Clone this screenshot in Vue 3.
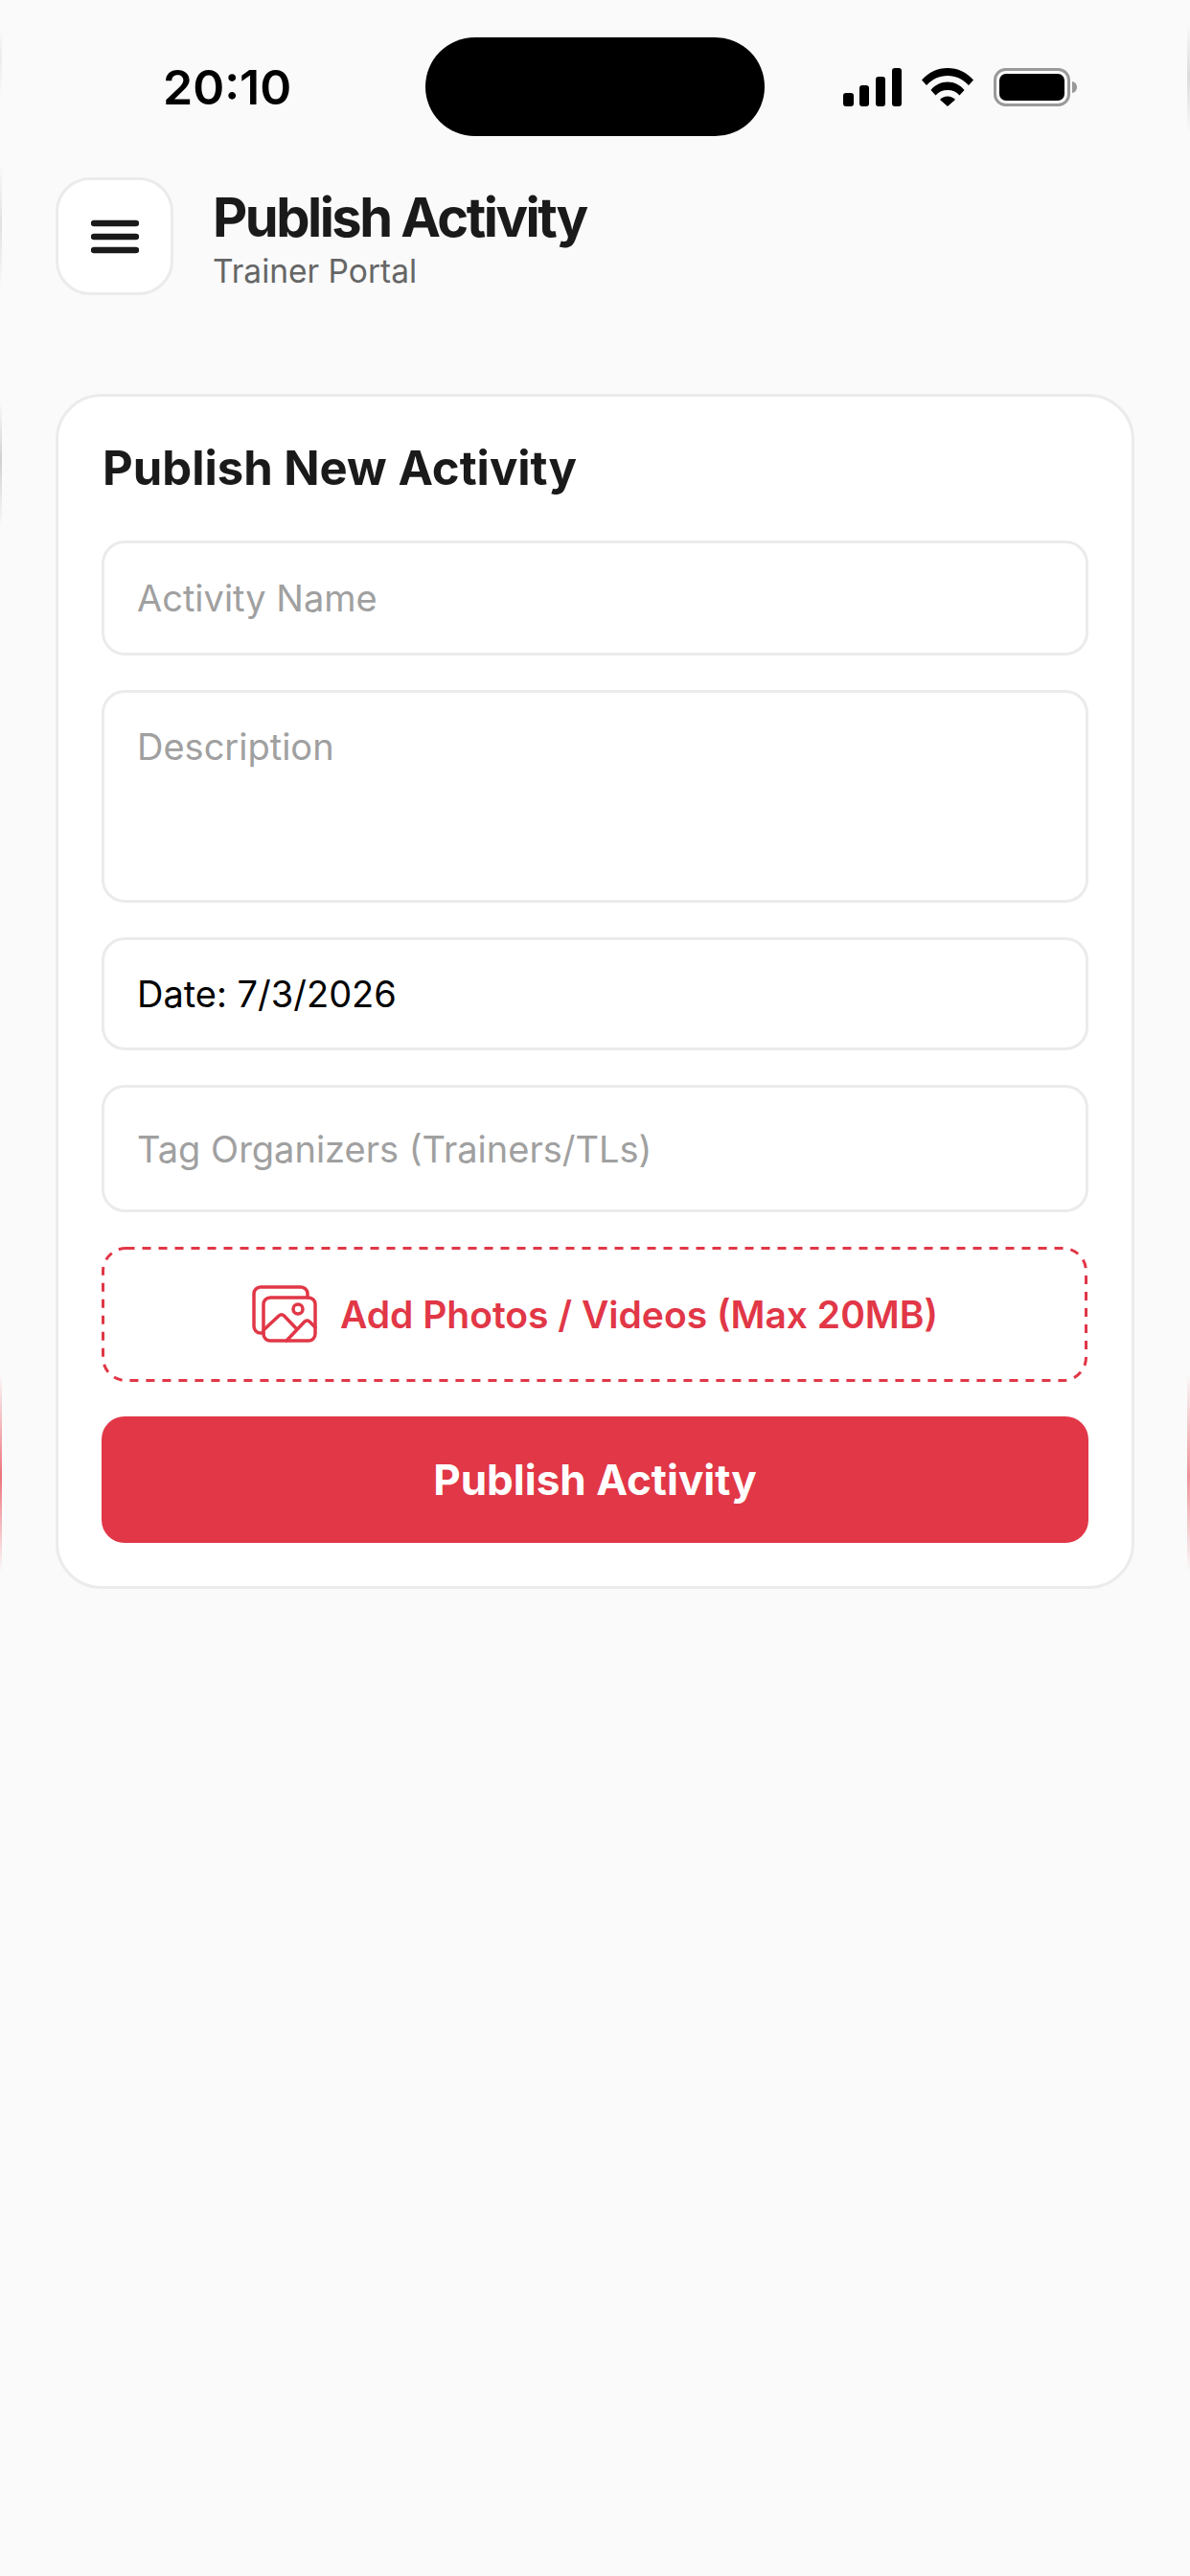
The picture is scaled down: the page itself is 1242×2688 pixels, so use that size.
<script setup>
const rows = [
  { key: 'name', text: 'Activity Name', cls: 'field placeholder' },
  { key: 'desc', text: 'Description', cls: 'field placeholder area' },
  { key: 'date', text: 'Date: 7/3/2026', cls: 'field value short' },
  { key: 'tags', text: 'Tag Organizers (Trainers/TLs)', cls: 'field placeholder tall' }
]
</script>

<template>
  <div class="page">
    <div class="edge edge-left"></div>
    <div class="edge edge-right"></div>

    <div class="status">
      <span class="time">20:10</span>
      <div class="island"></div>
      <div class="status-icons">
        <svg width="61" height="40" viewBox="0 0 61 40">
          <rect x="0" y="26" width="11" height="14" rx="3" />
          <rect x="17" y="18" width="10" height="22" rx="3" />
          <rect x="34" y="9" width="10" height="31" rx="3" />
          <rect x="51" y="0" width="10" height="40" rx="3" />
        </svg>
        <svg width="54" height="40" viewBox="0 0 54 40">
          <path d="M0 12.500C7 4.500 16.500 0 27 0s20 4.500 27 12.500l-5 5.500C43 11.500 35.500 8 27 8S11 11.500 5 18z" />
          <path d="M9.500 23C14 17.500 20 14.500 27 14.500S40 17.500 44.500 23l-5 5.500C36 24.800 32 23 27 23s-9 1.800-12.500 5.500z" />
          <path d="M19 33c2-2.300 4.800-3.500 8-3.500s6 1.200 8 3.500l-8 7z" />
        </svg>
        <svg width="87" height="40" viewBox="0 0 87 40">
          <rect x="1.500" y="1.500" width="77" height="37" rx="11" fill="none" stroke="#999" stroke-width="3" />
          <rect x="6" y="6" width="68" height="28" rx="7" />
          <path d="M82 14c3 .5 5 3 5 6s-2 5.500-5 6z" fill="#999" />
        </svg>
      </div>
    </div>

    <header class="header">
      <div class="menu">
        <svg width="50" height="36" viewBox="0 0 50 36">
          <path d="M3 4h44M3 18h44M3 32h44" fill="none" stroke="#1a1a1a" stroke-width="6.500" stroke-linecap="round" />
        </svg>
      </div>
      <div class="heading">
        <h1 class="title">Publish Activity</h1>
        <p class="subtitle">Trainer Portal</p>
      </div>
    </header>

    <section class="card">
      <h2 class="card-title">Publish New Activity</h2>
      <div class="form">
        <div v-for="row in rows" :key="row.key" :class="row.cls">{{ row.text }}</div>
        <div class="upload">
          <svg class="dash" width="1029" height="141" viewBox="0 0 1029 141" fill="none">
            <rect x="1.500" y="1.500" width="1026" height="138" rx="24" stroke="#e13747" stroke-width="3" stroke-dasharray="9 8" />
          </svg>
          <svg width="68" height="60" viewBox="0 0 68 60" fill="none" stroke="#e13747" stroke-width="3.500" stroke-linecap="round" stroke-linejoin="round">
            <path d="M12 50H9a7 7 0 0 1-7-7V9a7 7 0 0 1 7-7h42a7 7 0 0 1 7 7v4" />
            <rect x="12" y="13" width="54" height="45" rx="7" />
            <circle cx="48" cy="25" r="5" />
            <path d="M12 47l16-15q3-2.500 5.500 0L46 45" />
            <path d="M36 58l19-20q2.500-2 5 0l6 6" />
          </svg>
          <span>Add Photos / Videos (Max 20MB)</span>
        </div>
        <div class="publish">Publish Activity</div>
      </div>
    </section>
  </div>
</template>

<style>
html, body { margin: 0; background: #fafafa; }
</style>

<style scoped>
.page {
  position: relative;
  width: 1242px;
  height: 2688px;
  overflow: hidden;
  background: #fafafa;
  font-family: Inter, "Liberation Sans", sans-serif;
  box-sizing: border-box;
  padding: 39px 58px 0;
}
.edge { position: absolute; top: 0; height: 1700px; }
.edge-left {
  left: 0;
  width: 2px;
  background: linear-gradient(to bottom,
    rgba(0,0,0,0) 30px, rgba(0,0,0,.06) 60px, rgba(0,0,0,0) 100px,
    rgba(0,0,0,0) 170px, rgba(0,0,0,.1) 235px, rgba(0,0,0,0) 300px,
    rgba(0,0,0,0) 420px, rgba(0,0,0,.17) 480px, rgba(0,0,0,0) 550px,
    rgba(230,57,70,0) 1433px, rgba(230,57,70,.7) 1540px, rgba(230,57,70,0) 1640px);
}
.edge-right {
  right: 0;
  width: 3px;
  background: linear-gradient(to bottom,
    rgba(0,0,0,0) 25px, rgba(0,0,0,.12) 80px, rgba(0,0,0,0) 140px,
    rgba(230,57,70,0) 1433px, rgba(230,57,70,.55) 1540px, rgba(230,57,70,0) 1640px);
}
.status {
  height: 103px;
  display: flex;
  align-items: center;
}
.time {
  margin-left: 112px;
  width: 274px;
  font-size: 50px;
  font-weight: 600;
  color: #000;
}
.island {
  width: 354px;
  height: 103px;
  border-radius: 52px;
  background: #000;
}
.status-icons {
  display: flex;
  align-items: center;
  margin-left: 82px;
  gap: 21px;
}
.status-icons svg { display: block; fill: #000; }
.header {
  display: flex;
  align-items: center;
  gap: 41px;
  margin-top: 43px;
}
.menu {
  width: 123px;
  height: 123px;
  box-sizing: border-box;
  border: 3px solid #ebebeb;
  border-radius: 36px;
  background: #fff;
  display: flex;
  align-items: center;
  justify-content: center;
}
.heading { display: flex; flex-direction: column; gap: 1px; padding-top: 3px; }
.title {
  margin: 0;
  font-size: 56px;
  line-height: 68px;
  font-weight: 700;
  color: #1a1a1a;
  letter-spacing: -2.5px;
}
.subtitle {
  margin: 0;
  font-size: 33.5px;
  line-height: 42px;
  color: #666;
}
.card {
  margin-top: 103px;
  width: 1126px;
  box-sizing: border-box;
  border: 3px solid #ebebeb;
  border-radius: 48px;
  background: #fff;
  padding: 42px 45px 45px;
}
.card-title {
  margin: 0 0 42px 1px;
  font-size: 49px;
  line-height: 66px;
  font-weight: 700;
  color: #1a1a1a;
}
.form { display: flex; flex-direction: column; gap: 36px; }
.field {
  height: 120px;
  box-sizing: border-box;
  border: 3px solid #ebebeb;
  border-radius: 24px;
  padding: 0 34px;
  display: flex;
  align-items: center;
  font-size: 38px;
  line-height: 48px;
}
.placeholder { color: #a0a0a0; }
.value { color: #000; }
.area { height: 222px; align-items: flex-start; padding-top: 32px; }
.short { height: 118px; }
.tall { height: 133px; }
.upload {
  position: relative;
  height: 141px;
  box-sizing: border-box;
  padding-bottom: 1px;
  display: flex;
  align-items: center;
  justify-content: center;
  gap: 24px;
  color: #e13747;
  font-size: 39px;
  font-weight: 600;
}
.upload svg { display: block; flex: none; }
.upload .dash { position: absolute; left: 0; top: 0; }
.publish {
  height: 132px;
  border-radius: 24px;
  background: #e13747;
  color: #fff;
  display: flex;
  align-items: center;
  justify-content: center;
  font-size: 44px;
  font-weight: 700;
}
</style>
